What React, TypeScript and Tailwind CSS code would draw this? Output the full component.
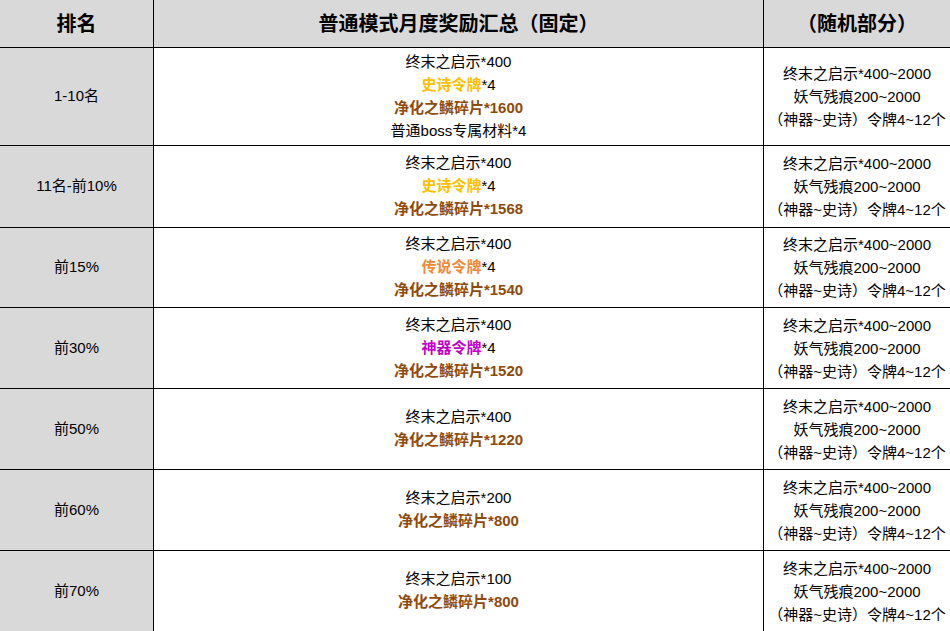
import React from "react";

const random = [
  "终末之启示*400~2000",
  "妖气残痕200~2000",
  "（神器~史诗）令牌4~12个",
];

const BROWN = "text-[#8f4a0e] font-bold";

const rows: { rank: string; h: string; fixed: { parts: { t: string; cls: string }[] }[] }[] = [
  {
    rank: "1-10名",
    h: "h-[98px]",
    fixed: [
      { parts: [{ t: "终末之启示*400", cls: "" }] },
      { parts: [{ t: "史诗令牌", cls: "text-[#ffc000] font-bold" }, { t: "*4", cls: "" }] },
      { parts: [{ t: "净化之鳞碎片*1600", cls: BROWN }] },
      { parts: [{ t: "普通boss专属材料*4", cls: "" }] },
    ],
  },
  {
    rank: "11名-前10%",
    h: "h-[82px]",
    fixed: [
      { parts: [{ t: "终末之启示*400", cls: "" }] },
      { parts: [{ t: "史诗令牌", cls: "text-[#ffc000] font-bold" }, { t: "*4", cls: "" }] },
      { parts: [{ t: "净化之鳞碎片*1568", cls: BROWN }] },
    ],
  },
  {
    rank: "前15%",
    h: "h-[80px]",
    fixed: [
      { parts: [{ t: "终末之启示*400", cls: "" }] },
      { parts: [{ t: "传说令牌", cls: "text-[#f08a3a] font-bold" }, { t: "*4", cls: "" }] },
      { parts: [{ t: "净化之鳞碎片*1540", cls: BROWN }] },
    ],
  },
  {
    rank: "前30%",
    h: "h-[81px]",
    fixed: [
      { parts: [{ t: "终末之启示*400", cls: "" }] },
      { parts: [{ t: "神器令牌", cls: "text-[#c000c8] font-bold" }, { t: "*4", cls: "" }] },
      { parts: [{ t: "净化之鳞碎片*1520", cls: BROWN }] },
    ],
  },
  {
    rank: "前50%",
    h: "h-[81px]",
    fixed: [
      { parts: [{ t: "终末之启示*400", cls: "" }] },
      { parts: [{ t: "净化之鳞碎片*1220", cls: BROWN }] },
    ],
  },
  {
    rank: "前60%",
    h: "h-[81px]",
    fixed: [
      { parts: [{ t: "终末之启示*200", cls: "" }] },
      { parts: [{ t: "净化之鳞碎片*800", cls: BROWN }] },
    ],
  },
  {
    rank: "前70%",
    h: "h-[81px]",
    fixed: [
      { parts: [{ t: "终末之启示*100", cls: "" }] },
      { parts: [{ t: "净化之鳞碎片*800", cls: BROWN }] },
    ],
  },
];

export default function App() {
  return (
    <div
      className="w-[950px] h-[631px] overflow-hidden bg-white text-black"
      style={{ fontFamily: '"Liberation Sans", "Noto Sans CJK SC", sans-serif' }}
    >
      <div className="grid grid-cols-[154px_610px_186px]">
        <div className="h-[48px] bg-[#d9d9d9] border-r border-b border-black flex items-center justify-center text-[20px] font-bold">
          排名
        </div>
        <div className="h-[48px] bg-[#d9d9d9] border-r border-b border-black flex items-center justify-center text-[20px] font-bold">
          普通模式月度奖励汇总（固定）
        </div>
        <div className="h-[48px] bg-[#d9d9d9] border-b border-black flex items-center justify-center text-[20px] font-bold">
          （随机部分）
        </div>
        {rows.map((r, i) => (
          <React.Fragment key={i}>
            <div
              className={`${r.h} bg-[#d9d9d9] border-r border-b border-black flex items-center justify-center text-[15px]`}
            >
              {r.rank}
            </div>
            <div
              className={`${r.h} bg-white border-r border-b border-black flex flex-col items-center justify-center text-[15px] leading-[23px] pb-[2px]`}
            >
              {r.fixed.map((l, j) => (
                <div key={j}>
                  {l.parts.map((p, k) => (
                    <span key={k} className={p.cls}>
                      {p.t}
                    </span>
                  ))}
                </div>
              ))}
            </div>
            <div
              className={`${r.h} bg-white border-b border-black flex flex-col items-center justify-center text-[15px] leading-[23px]`}
            >
              {random.map((t, j) => (
                <div key={j}>{t}</div>
              ))}
            </div>
          </React.Fragment>
        ))}
      </div>
    </div>
  );
}
